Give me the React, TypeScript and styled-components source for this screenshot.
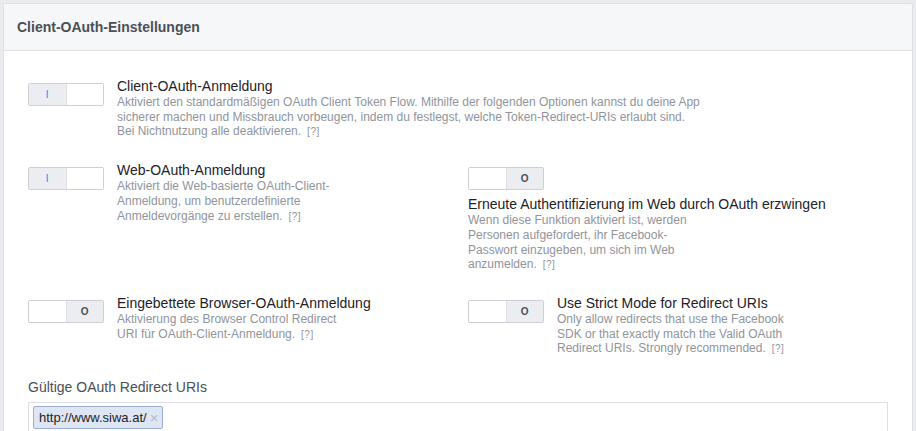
import React from "react";
import styled, { createGlobalStyle } from "styled-components";

const GlobalStyle = createGlobalStyle`
  html, body {
    margin: 0;
    padding: 0;
    background: #e9ebee;
  }
  body {
    padding: 3px 3px 0 3px;
    font-family: "Liberation Sans", Arial, Helvetica, sans-serif;
    -webkit-font-smoothing: antialiased;
  }
`;

const Panel = styled.section`
  background: #fff;
  border: 1px solid #dddfe2;
  border-bottom: none;
  border-radius: 3px 3px 0 0;
  min-height: 428px;
  box-sizing: border-box;
`;

const Header = styled.header`
  height: 46px;
  display: flex;
  align-items: center;
  padding-left: 13px;
  background: #f6f7f9;
  border-bottom: 1px solid #dddfe2;
  font-size: 14px;
  font-weight: bold;
  color: #4b4f56;
`;

const Body = styled.div`
  padding: 26px 24px 0 24px;
  display: flex;
  flex-direction: column;
`;

const Grid = styled.div`
  display: grid;
  grid-template-columns: 440px 1fr;
  row-gap: 21px;
  margin-bottom: 21px;
`;

const FullRow = styled.div`
  grid-column: 1 / -1;
`;

const Item = styled.div<{ $stacked?: boolean }>`
  display: flex;
  flex-direction: ${(p) => (p.$stacked ? "column" : "row")};
  align-items: flex-start;
  gap: ${(p) => (p.$stacked ? "5px" : "13px")};
`;

const ToggleBox = styled.div`
  flex: none;
  margin-top: 6px;
  width: 76px;
  height: 23px;
  box-sizing: border-box;
  border: 1px solid #ccd0d5;
  border-radius: 2px;
  display: flex;
  overflow: hidden;
`;

const Half = styled.div<{ $active: boolean }>`
  flex: 1;
  display: flex;
  align-items: center;
  justify-content: center;
  background: ${(p) => (p.$active ? "#ebedf0" : "#fff")};
  & + & {
    border-left: 1px solid #dddfe2;
  }
`;

const OnMark = styled.span`
  color: #4080ff;
  font-size: 10px;
  font-weight: normal;
`;

const OffMark = styled.span`
  color: #4b4f56;
  font-size: 10px;
  font-weight: bold;
`;

const TextBlock = styled.div<{ $width?: number }>`
  width: ${(p) => (p.$width ? `${p.$width}px` : "auto")};
`;

const Title = styled.div`
  font-size: 14px;
  line-height: 18px;
  color: #1d2129;
  white-space: nowrap;
`;

const Desc = styled.div`
  font-size: 12px;
  line-height: 14.7px;
  color: #90949c;
`;

const Help = styled.span`
  font-size: 10px;
  color: #90949c;
  margin-left: 6px;
  letter-spacing: 0.5px;
`;

const FieldLabel = styled.div`
  font-size: 14px;
  line-height: 18px;
  color: #4b4f56;
  margin-bottom: 6px;
`;

const TokenInput = styled.div`
  height: 40px;
  box-sizing: border-box;
  border: 1px solid #dddfe2;
  border-bottom: none;
  padding: 3px 4px;
  display: flex;
  align-items: flex-start;
`;

const Token = styled.span`
  display: inline-flex;
  align-items: center;
  gap: 3px;
  height: 23px;
  box-sizing: border-box;
  padding: 0 4px 0 5px;
  background: #dfe6f3;
  border: 1px solid #9aaed3;
  border-radius: 2px;
  font-size: 13px;
  color: #1d2129;
`;

const Remove = styled.span`
  color: #b4bccb;
  font-size: 15px;
  line-height: 1;
`;

const Toggle = ({ on }: { on: boolean }) => (
  <ToggleBox>
    <Half $active={on}>{on && <OnMark>I</OnMark>}</Half>
    <Half $active={!on}>{!on && <OffMark>O</OffMark>}</Half>
  </ToggleBox>
);

export default function App() {
  return (
    <>
      <GlobalStyle />
      <Panel>
        <Header>Client-OAuth-Einstellungen</Header>
        <Body>
          <Grid>
            <FullRow>
              <Item>
                <Toggle on />
                <TextBlock>
                  <Title>Client-OAuth-Anmeldung</Title>
                  <Desc>
                    Aktiviert den standardmäßigen OAuth Client Token Flow. Mithilfe der folgenden Optionen kannst du deine App
                    <br />
                    sicherer machen und Missbrauch vorbeugen, indem du festlegst, welche Token-Redirect-URIs erlaubt sind.
                    <br />
                    Bei Nichtnutzung alle deaktivieren.<Help>[?]</Help>
                  </Desc>
                </TextBlock>
              </Item>
            </FullRow>

            <Item>
              <Toggle on />
              <TextBlock $width={232}>
                <Title>Web-OAuth-Anmeldung</Title>
                <Desc>
                  Aktiviert die Web-basierte OAuth-Client-
                  <br />
                  Anmeldung, um benutzerdefinierte
                  <br />
                  Anmeldevorgänge zu erstellen.<Help>[?]</Help>
                </Desc>
              </TextBlock>
            </Item>

            <Item $stacked>
              <Toggle on={false} />
              <TextBlock>
                <Title>Erneute Authentifizierung im Web durch OAuth erzwingen</Title>
                <Desc>
                  Wenn diese Funktion aktiviert ist, werden
                  <br />
                  Personen aufgefordert, ihr Facebook-
                  <br />
                  Passwort einzugeben, um sich im Web
                  <br />
                  anzumelden.<Help>[?]</Help>
                </Desc>
              </TextBlock>
            </Item>

            <Item>
              <Toggle on={false} />
              <TextBlock $width={232}>
                <Title>Eingebettete Browser-OAuth-Anmeldung</Title>
                <Desc>
                  Aktivierung des Browser Control Redirect
                  <br />
                  URI für OAuth-Client-Anmeldung.<Help>[?]</Help>
                </Desc>
              </TextBlock>
            </Item>

            <Item>
              <Toggle on={false} />
              <TextBlock $width={240}>
                <Title>Use Strict Mode for Redirect URIs</Title>
                <Desc>
                  Only allow redirects that use the Facebook
                  <br />
                  SDK or that exactly match the Valid OAuth
                  <br />
                  Redirect URIs. Strongly recommended.<Help>[?]</Help>
                </Desc>
              </TextBlock>
            </Item>
          </Grid>

          <FieldLabel>Gültige OAuth Redirect URIs</FieldLabel>
          <TokenInput>
            <Token>
              http://www.siwa.at/<Remove>×</Remove>
            </Token>
          </TokenInput>
        </Body>
      </Panel>
    </>
  );
}
